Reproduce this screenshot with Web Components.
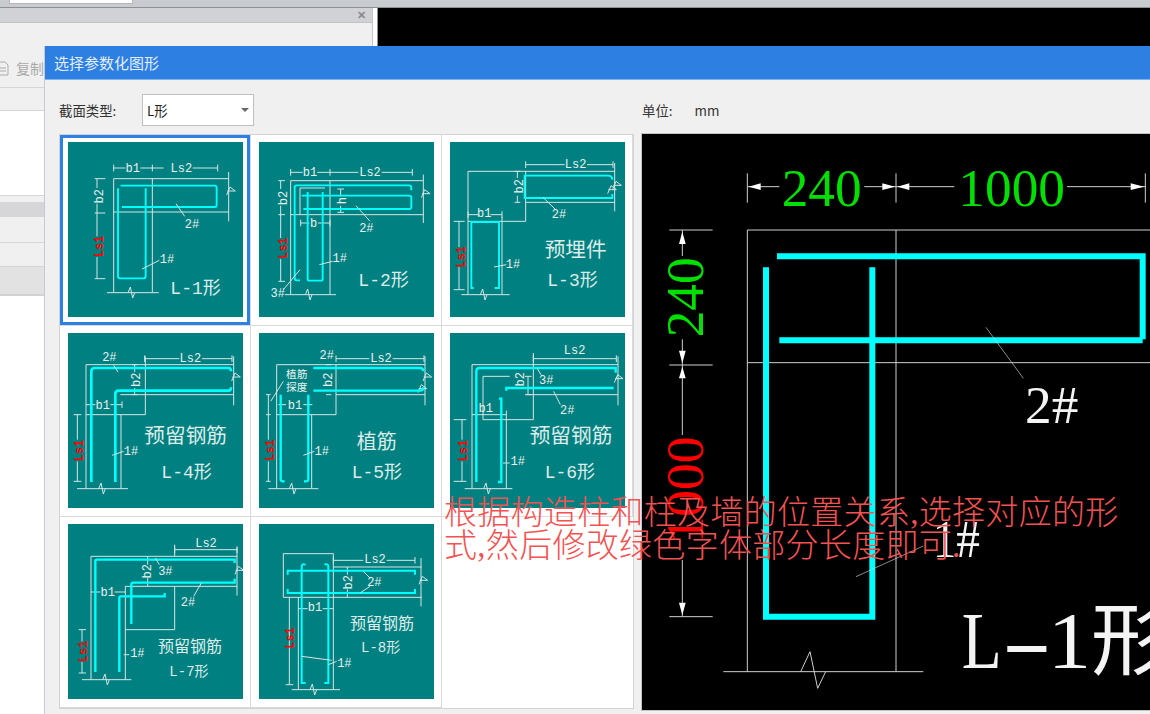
<!DOCTYPE html>
<html lang="zh">
<head>
<meta charset="utf-8">
<title>选择参数化图形</title>
<style>
  html, body { margin: 0; padding: 0; width: 1150px; height: 714px; overflow: hidden; background: #fff; }
  body { position: relative; font-family: "Noto Sans CJK SC", sans-serif; }
</style>
</head>
<body>
<app-backdrop></app-backdrop>
<param-dialog heading="选择参数化图形">
  <span slot="label">截面类型:</span>
  <select-box slot="select" value="L形"></select-box>
  <span slot="unit">单位:<span style="margin-left:22px">mm</span></span>
  <section-grid slot="grid">
    <rebar-tile shape="1" selected></rebar-tile>
    <rebar-tile shape="2"></rebar-tile>
    <rebar-tile shape="3"></rebar-tile>
    <rebar-tile shape="4"></rebar-tile>
    <rebar-tile shape="5"></rebar-tile>
    <rebar-tile shape="6"></rebar-tile>
    <rebar-tile shape="7"></rebar-tile>
    <rebar-tile shape="8"></rebar-tile>
  </section-grid>
  <cad-preview slot="preview"></cad-preview>
</param-dialog>
<note-overlay>根据构造柱和柱及墙的位置关系,选择对应的形式,然后修改绿色字体部分长度即可.</note-overlay>

<script>
// ---- helpers for the thumbnail drawings (coords are 3x pixels)
const w = d => `<path class="w" d="${d}"/>`;
const c = (d, sw) => `<path class="c" d="${d}"${sw ? ` style="stroke-width:${sw}"` : ''}/>`;
const t = (x, y, s, size = 36) => `<text x="${x}" y="${y}" font-size="${size}" text-anchor="middle">${s}</text>`;
const big = (x, y, s, size = 54) => `<text class="big" x="${x}" y="${y}" font-size="${size}">${s}</text>`;
const rot = (x, y, s, red) => `<text class="${red ? 'red' : ''}" x="${x}" y="${y}" font-size="36" text-anchor="middle" transform="rotate(-90 ${x} ${y})">${s}</text>`;
const zb = (x, y) => `M${x - 10} ${y}L${x - 3} ${y - 17}L${x + 4} ${y + 16}L${x + 10} ${y}`;
const zr = (x, y) => `M${x - 6} ${y + 14}L${x + 4} ${y - 10}L${x + 20} ${y + 2}L${x - 4} ${y + 2}`;

const TILES = {
  1: { vb: '38 37', svg:
    w('M175 105V125M291 105V125M487 105V125M175 115H210M255 115H325M412 115H487') +
    w('M175 147V489M291 147V489M175 147H520M175 247H520M520 127V275M155 489H310') +
    w(zb(228, 489) + zr(520, 182)) +
    w('M118 147H150M118 250H150M118 447H150M125 147V175M125 222V320M125 382V447') +
    c('M196 168H478Q484 168 484 174V226Q484 232 478 232H200') +
    c('M188 176V440Q188 446 194 446H265Q271 446 271 440V176') +
    w('M362 222L388 260M260 418L312 392') +
    t(232, 126, 'b1') + t(378, 126, 'Ls2') + rot(143, 200, 'b2') + rot(143, 350, 'Ls1', 1) +
    t(410, 296, '2#') + t(335, 400, '1#') + big(345, 492, 'L-1形') },
  2: { vb: '27 37', svg:
    w('M122 118V138M240 118V138M487 118V138M122 128H158M202 128H325M395 128H487') +
    w('M122 153V495M240 153V495M122 153H520M122 255H520M520 135V280M105 495H258') +
    w(zb(176, 495) + zr(520, 190)) +
    w('M150 255V175H225M85 153H105M85 255H105M85 455H105M92 153V178M92 228V325M92 388V455') +
    w('M262 178H282M262 248H282M272 178V200M272 228V248M152 270V290M240 270V290M152 280H178M204 280H240') +
    c('M150 452H140Q134 452 134 446V172Q134 167 140 167H478Q484 167 484 175V182') +
    c('M155 198H478Q484 198 484 204V232Q484 238 478 238H160') +
    c('M173 187V448Q173 453 178 453H212Q218 453 218 448V187') +
    w('M318 228L360 275M208 405L248 395M150 420L100 480') +
    t(180, 139, 'b1') + t(360, 139, 'Ls2') + rot(110, 205, 'b2') + rot(110, 355, 'Ls1', 1) +
    rot(288, 213, 'h') + t(191, 291, 'b') +
    t(349, 306, '2#') + t(269, 396, '1#') + t(83, 501, '3#') + big(325, 470, 'L-2形') },
  3: { vb: '601 37', svg:
    w('M828 95V115M1090 95V115M828 105H945M1012 105H1090') +
    w('M655 125V495M655 125H1095M828 125V275M655 275H828M757 262V495M828 218H1095M1095 100V245M635 495H780') +
    w(zb(702, 495) + zr(1095, 165) + zr(1080, 178)) +
    w('M795 125H812M795 218H812M803 125V145M803 198V218M655 245V265M757 245V265M655 255H685M722 255H757') +
    w('M612 275H645M612 480H645M628 275V352M628 412V480') +
    c('M1088 150Q1088 138 1075 138H825V205H1088V193') +
    c('M672 475H665V277H748V475H735') +
    w('M880 203L918 240M733 412L770 405') +
    t(978, 116, 'Ls2') + t(704, 262, 'b1') + rot(820, 170, 'b2') + rot(645, 382, 'Ls1', 1) +
    t(928, 265, '2#') + t(790, 414, '1#') + big(885, 383, '预埋件', 62) + big(893, 468, 'L-3形') },
  4: { vb: '38 25', svg:
    w('M268 92V112M530 92V112M268 102H372M440 102H530') +
    w('M92 120V492M92 120H535M270 95V270M92 270H270M197 270V492M195 210H535M535 95V242M65 492H218') +
    w(zb(140, 492) + zr(535, 155)) +
    w('M230 120H246M230 210H246M238 120V142M238 190V210M92 240H120M165 240H200M200 230V250') +
    w('M55 270H78M55 470H78M66 270V345M66 410V470') +
    c('M108 472V140Q108 130 118 130H520Q527 130 527 140', 8) +
    c('M180 472V208Q180 198 190 198H520Q527 198 527 188', 8) +
    w('M175 122L188 142M170 392L205 380') +
    t(162, 110, '2#') + t(142, 252, 'b1') + t(405, 113, 'Ls2') + rot(254, 165, 'b2') + rot(84, 378, 'Ls1', 1) +
    t(227, 392, '1#') + big(267, 355, '预留钢筋', 62) + big(318, 460, 'L-4形') },
  5: { vb: '27 25', svg:
    w('M258 92V112M522 92V112M258 102H358M428 102H522') +
    w('M80 120V492M80 120H525M258 120V270M80 270H258M185 270V492M258 210H525M525 95V242M55 492H205') +
    w(zb(128, 492) + zr(525, 155) + zr(510, 190)) +
    w('M228 120H244M228 210H244M85 240H108M160 240H187M48 210H62M48 270H62M48 470H62M55 210V345M55 410V470') +
    c('M190 130H510Q520 130 520 140', 7) +
    c('M190 198H510Q520 198 520 188', 7) +
    c('M92 210V465Q92 470 104 470', 7) +
    c('M175 210V465Q175 470 162 470', 7) +
    w('M100 170L62 230M160 392L193 380') +
    t(230, 103, '2#') + t(393, 113, 'Ls2') + t(135, 252, 'b1') + rot(245, 165, 'b2') + rot(72, 376, 'Ls1', 1) +
    t(140, 160, '植筋', 32) + t(140, 198, '探度', 32) + t(215, 392, '1#') +
    big(320, 373, '植筋', 60) + big(305, 460, 'L-5形') },
  6: { vb: '601 25', svg:
    w('M851 92V112M1100 92V112M851 102H1100') +
    w('M667 120V492M667 120H1105M851 85V285M700 285H851M700 155V285M700 155H780M830 210H1105M1105 95V242M667 270H770M770 258V492M645 492H788') +
    w(zb(712, 492) + zr(1100, 160)) +
    w('M835 155V210M826 155H846M826 210H846M612 285H650M612 470H650M637 285V345M637 410V470') +
    c('M680 472V140Q680 130 690 130H1098V144', 7) +
    c('M770 198V190H1092', 7) +
    c('M748 222H755V472H745', 7) +
    w('M862 130L875 152M912 200L932 240M760 415H780') +
    t(975, 88, 'Ls2') + t(708, 261, 'b1') + rot(822, 164, 'b2') + rot(652, 378, 'Ls1', 1) +
    t(890, 178, '3#') + t(953, 268, '2#') + t(804, 420, '1#') +
    big(840, 355, '预留钢筋', 62) + big(885, 460, 'L-6形') },
  7: { vb: '38 28', svg:
    w('M358 95V115M545 95V115M358 105H545') +
    w('M107 125V495M107 125H545M358 90V125M358 215V345M210 345H358M210 215V495M210 215H545M545 98V243M80 495H228') +
    w(zb(152, 495) + zr(545, 165)) +
    w('M277 125V150M277 190V215M107 232H135M178 232H210M70 345H92M80 345V380M80 442V475M70 475H92') +
    c('M120 472V140Q120 135 125 135H538V145', 7) +
    c('M228 328V210Q228 204 234 204H538V192', 7) +
    c('M192 472V248Q192 245 196 245H328V235', 7) +
    w('M300 130L312 150M438 205L415 245M205 420H222') +
    t(452, 96, 'Ls2') + t(157, 243, 'b1') + rot(288, 170, 'b2') + rot(96, 410, 'Ls1', 1) +
    t(330, 181, '3#') + t(398, 273, '2#') + t(246, 426, '1#') +
    big(308, 412, '预留钢筋', 48) + big(342, 483, 'L-7形', 42) },
  8: { vb: '612 28', svg:
    w('M835 127V147M1080 127V147M835 137H925M995 137H1080') +
    w('M685 117H835V248H685ZM835 157H1100M835 248H1100M1098 130V275M730 248V525M835 248V525M710 525H855') +
    w(zb(775, 525) + zr(1098, 195)) +
    w('M877 157V180M877 224V248M730 282H758M803 282H835M703 248V510M692 510H715') +
    c('M698 180V168H1080V180', 6) +
    c('M698 223V235H1080V223', 6) +
    c('M752 150Q740 145 740 156V505H752', 6) +
    c('M808 150Q820 145 820 156V505H808', 6) +
    w('M925 170L945 190M945 215L915 235M740 425L830 437M820 450L845 440') +
    t(960, 146, 'Ls2') + t(780, 290, 'b1') + rot(892, 203, 'b2') + rot(717, 370, 'Ls1', 1) +
    t(958, 214, '2#') + t(868, 456, '1#') +
    big(885, 342, '预留钢筋', 48) + big(918, 411, 'L-8形', 42) },
};

class AppBackdrop extends HTMLElement {
  connectedCallback() {
    this.attachShadow({ mode: 'open' }).innerHTML = `
      <style>
        :host { display: flex; flex-direction: column; width: 1150px; height: 714px; color: #aaa; font-size: 14px; }
        .top { height: 7px; background: #c8cbd0; border-bottom: 1px solid #8e9094; flex: none; }
        .tab { width: 122px; height: 3px; margin-left: 9px; background: #fff; border: 1px solid #b5b6b8; border-top: 0; }
        .main { flex: 1; display: flex; min-height: 0; }
        .panel { width: 372px; display: flex; flex-direction: column; flex: none; }
        .gap { width: 4px; background: #fff; border-left: 1px solid #c6c7c9; border-right: 1px solid #8e9094; flex: none; }
        .black { flex: 1; background: #000; }
        .head { height: 14px; background: #d0d2d5; border-bottom: 1px solid #c2c3c5; display: flex; justify-content: flex-end; align-items: center; padding-right: 6px; font: bold 11px "Liberation Sans", sans-serif; color: #8a8a8a; }
        .tools { height: 64px; background: #f0f0f0; border-bottom: 1px solid #d6d6d6; display: flex; align-items: flex-end; }
        .tools span { display: flex; align-items: center; gap: 7px; height: 26px; margin-bottom: 6px; margin-left: -3px; }
        .sub { height: 22px; background: #f0f0f0; border-bottom: 1px solid #d6d6d6; }
        .list { height: 84px; background: #fff; border-bottom: 1px solid #d6d6d6; }
        .bar { height: 6px; background: #f0f0f0; }
        .bar2 { height: 15px; background: #d6d6d8; }
        .row { height: 25px; background: #f0f0f0; border-bottom: 1px solid #d6d6d6; }
        .row3 { height: 27px; background: #e2e2e2; border-bottom: 2px solid #d2d2d4; }
        .rest { flex: 1; background: #fff; }
      </style>
      <div class="top"><div class="tab"></div></div>
      <div class="main">
        <div class="panel">
          <div class="head">✕</div>
          <div class="tools"><span><svg width="12" height="15" viewBox="0 0 12 15"><path d="M1 1H8L11 4V14H1Z M3 7H9M3 10H9" fill="none" stroke="#aaa"/></svg>复制</span></div>
          <div class="sub"></div>
          <div class="list"></div>
          <div class="bar"></div>
          <div class="bar2"></div>
          <div class="row"></div>
          <div class="row" style="height:23px"></div>
          <div class="row3"></div>
          <div class="rest"></div>
        </div>
        <div class="gap"></div>
        <div class="black"></div>
      </div>`;
  }
}

class ParamDialog extends HTMLElement {
  connectedCallback() {
    const heading = this.getAttribute('heading') || '';
    this.attachShadow({ mode: 'open' }).innerHTML = `
      <style>
        :host { position: absolute; left: 44px; top: 46px; right: 0; bottom: 0; display: flex; flex-direction: column; background: #f0f0f0; border-left: 1px solid #c5c8d6; font-size: 13.4px; color: #333; }
        .title { height: 33px; flex: none; background: #2d7fe2; border-bottom: 1px solid #7fb2ee; color: #e4eefb; font-size: 15px; display: flex; align-items: center; padding-left: 9px; }
        .body { display: grid; grid-template-columns: 576px 1fr; grid-template-rows: 53px 1fr; column-gap: 6px; padding-left: 14px; }
        .pick { display: flex; align-items: flex-start; padding-top: 14px; }
        .pick ::slotted(span) { line-height: 32px; width: 83px; flex: none; }
        .unit { padding: 14px 0 0 1px; line-height: 32px; }
      </style>
      <div class="title">${heading}</div>
      <div class="body">
        <div class="pick"><slot name="label"></slot><slot name="select"></slot></div>
        <div class="unit"><slot name="unit"></slot></div>
        <slot name="grid"></slot>
        <slot name="preview"></slot>
      </div>`;
  }
}

class SelectBox extends HTMLElement {
  connectedCallback() {
    this.attachShadow({ mode: 'open' }).innerHTML = `
      <style>
        :host { display: flex; width: 112px; height: 32px; box-sizing: border-box; background: #fff; border: 1px solid #c0c0c0; align-items: center; justify-content: space-between; padding: 0 4px; color: #222; font-size: 13.4px; }
        i { width: 0; height: 0; border: 4px solid transparent; border-top: 4px solid #666; border-bottom: 0; }
      </style>
      <span>${this.getAttribute('value')}</span><i></i>`;
  }
}

class SectionGrid extends HTMLElement {
  connectedCallback() {
    this.attachShadow({ mode: 'open' }).innerHTML = `
      <style>
        :host { display: grid; grid-template-columns: repeat(3, 191px); grid-auto-rows: 191px; width: 575px; height: 575px; box-sizing: border-box; margin-top: 1px; background: #fff; border: 1px solid #d2d3d6; }
      </style>
      <slot></slot>`;
  }
}

class RebarTile extends HTMLElement {
  connectedCallback() {
    const tile = TILES[this.getAttribute('shape')];
    this.attachShadow({ mode: 'open' }).innerHTML = `
      <style>
        :host { display: block; box-sizing: border-box; padding: 7px 7px 8px 8px; border-right: 1px solid #d8d9db; border-bottom: 1px solid #d8d9db; background: #fff; position: relative; }
        :host([selected])::after { content: ""; position: absolute; left: 0; top: 0; width: 190px; height: 190px; box-sizing: border-box; border: 3px solid #2f80e3; }
        svg { display: block; background: #008080; }
        path { fill: none; }
        .w { stroke: #d5e6e4; stroke-width: 3; }
        .c { stroke: #00ffff; stroke-width: 5.6; }
        text { fill: #e8f2f0; font-family: "Liberation Mono", "Noto Sans CJK SC", monospace; }
        .big { fill: #dcecea; }
        .red { fill: #ff0000; font-weight: bold; }
      </style>
      <svg width="175" height="175" viewBox="${tile.vb} 525 525">${tile.svg}</svg>`;
  }
}

class CadPreview extends HTMLElement {
  connectedCallback() {
    this.attachShadow({ mode: 'open' }).innerHTML = `
      <style>
        :host { display: block; width: 509px; height: 578px; box-sizing: border-box; background: #000; border: 1px solid #c4c4c4; border-right: 0; overflow: hidden; }
        svg { display: block; }
        path { fill: none; stroke: #cfcfcf; stroke-width: 3; }
        .c { stroke: #00ffff; stroke-width: 18; }
        polygon { fill: #fff; }
        text { font-family: "Liberation Serif", "Noto Sans CJK SC", serif; font-size: 160px; }
        .g { fill: #00e000; }
        .r { fill: #ff0000; }
        .wh { fill: #f4f4f4; }
      </style>
      <svg width="508" height="576" viewBox="6 12 1524 1728">
        <path d="M322 130V218M768 130V218M1516 130V218M322 170H418M673 170H943M1281 170H1516"/>
        <polygon points="326,170 362,160 362,180"/><polygon points="765,170 727,160 727,180"/>
        <polygon points="772,170 808,160 808,180"/><polygon points="1512,170 1472,160 1472,180"/>
        <text class="g" x="425" y="228">240</text>
        <text class="g" x="955" y="228">1000</text>

        <path d="M88 300H218M88 705H218M88 1460H218M127 300V378M127 628V915M127 1290V1460"/>
        <polygon points="127,305 117,342 137,342"/><polygon points="127,700 117,662 137,662"/>
        <polygon points="127,710 117,745 137,745"/><polygon points="127,1456 117,1418 137,1418"/>
        <text class="g" x="188" y="502" text-anchor="middle" transform="rotate(-90 188 502)">240</text>
        <text class="r" x="188" y="920" text-anchor="end" transform="rotate(-90 188 920)">1000</text>

        <path d="M322 300H1530M322 698H1530M322 300V1625M768 300V1625M250 1625H850"/>
        <path d="M482 1625L510 1565L533 1675L557 1625"/>
        <path class="c" d="M411 379H1508M1508 370V628M418 631H1508"/>
        <path class="c" d="M378 412V1460H697V412"/>

        <path d="M1038 592L1150 745M648 1340L850 1248" style="stroke-width:2"/>
        <text class="wh" x="1155" y="880">2#</text>
        <text class="wh" x="878" y="1280" textLength="142" lengthAdjust="spacingAndGlyphs">1#</text>
        <text class="wh" style="font-size:240px" x="965" y="1615"><tspan textLength="120" lengthAdjust="spacingAndGlyphs">L</tspan><tspan textLength="150" lengthAdjust="spacingAndGlyphs">-</tspan><tspan dx="-12" textLength="130" lengthAdjust="spacingAndGlyphs">1</tspan>形</text>
      </svg>`;
  }
}

class NoteOverlay extends HTMLElement {
  connectedCallback() {
    this.attachShadow({ mode: 'open' }).innerHTML = `
      <style>
        :host { position: absolute; left: 444px; top: 497px; width: 680px; display: block; color: #f25252; font-family: "Liberation Serif", "Noto Sans CJK SC", serif; font-size: 33px; letter-spacing: .3px; font-weight: 200; line-height: 33px; }
      </style>
      <slot></slot>`;
  }
}

customElements.define('app-backdrop', AppBackdrop);
customElements.define('param-dialog', ParamDialog);
customElements.define('select-box', SelectBox);
customElements.define('section-grid', SectionGrid);
customElements.define('rebar-tile', RebarTile);
customElements.define('cad-preview', CadPreview);
customElements.define('note-overlay', NoteOverlay);
</script>
</body>
</html>
